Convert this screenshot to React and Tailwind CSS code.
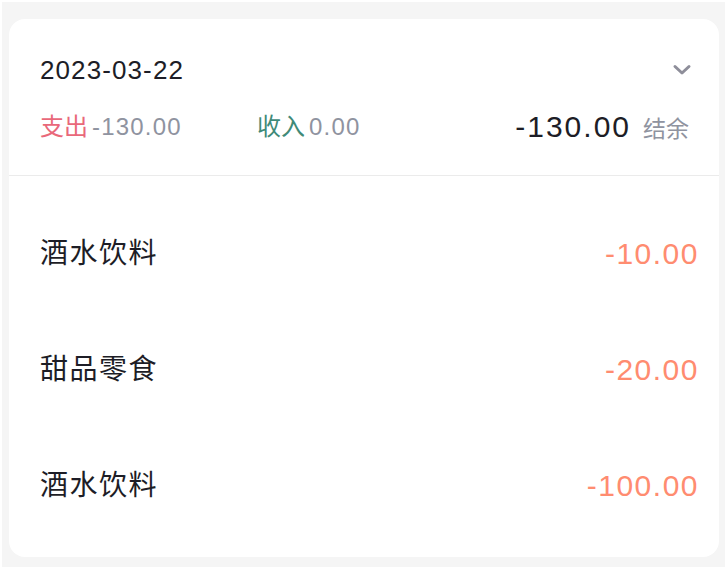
import React from "react";

const items = [
  { name: "酒水饮料", amount: "-10.00" },
  { name: "甜品零食", amount: "-20.00" },
  { name: "酒水饮料", amount: "-100.00" },
];

export default function App() {
  return (
    <div className="w-[725px] h-[567px] bg-white pl-[2px] pt-[2px] font-['Liberation_Sans','Noto_Sans_CJK_SC',sans-serif]">
      <div className="w-full h-full bg-[#f5f5f5] pl-[7px] pr-[6px] pt-[17px] pb-[10px]">
        <div className="h-full bg-white rounded-[16px] overflow-hidden flex flex-col">
          {/* header */}
          <div className="pl-[31px] pr-[30px] pt-[36px] h-[157px] border-b border-[#ebebeb]">
            <div className="flex items-center justify-between h-[30px]">
              <span className="text-[26px] leading-none tracking-[1.1px] text-[#1d1d26]">2023-03-22</span>
              <svg width="20" height="12" viewBox="0 0 20 12" className="mr-[-3px]">
                <path d="M3 2.5 L10 9 L17 2.5" fill="none" stroke="#8e8e9a" strokeWidth="3" strokeLinecap="round" strokeLinejoin="round" />
              </svg>
            </div>
            <div className="flex items-center mt-[25px] h-[34px]">
              <div className="w-[217px] text-[24px] leading-none">
                <span className="text-[#e9687a]">支出</span>
                <span className="text-[#8f93a0] tracking-[1.2px] ml-[4px]">-130.00</span>
              </div>
              <div className="text-[24px] leading-none">
                <span className="text-[#3f8a78]">收入</span>
                <span className="text-[#8f93a0] tracking-[1.2px] ml-[4px]">0.00</span>
              </div>
              <div className="ml-auto flex items-baseline">
                <span className="text-[30px] leading-none tracking-[2px] text-[#1d1d26]">-130.00</span>
                <span className="text-[23px] leading-none text-[#8f93a0] ml-[12px]">结余</span>
              </div>
            </div>
          </div>
          {/* rows */}
          <div className="pt-[20px] pl-[31px] pr-[20px]">
            {items.map((it, i) => (
              <div key={i} className="h-[116px] flex items-center justify-between">
                <span className="text-[28px] leading-none tracking-[1.5px] text-[#1d1d26]">{it.name}</span>
                <span className="text-[30px] leading-none tracking-[1.5px] text-[#ff8c70]">{it.amount}</span>
              </div>
            ))}
          </div>
        </div>
      </div>
    </div>
  );
}
